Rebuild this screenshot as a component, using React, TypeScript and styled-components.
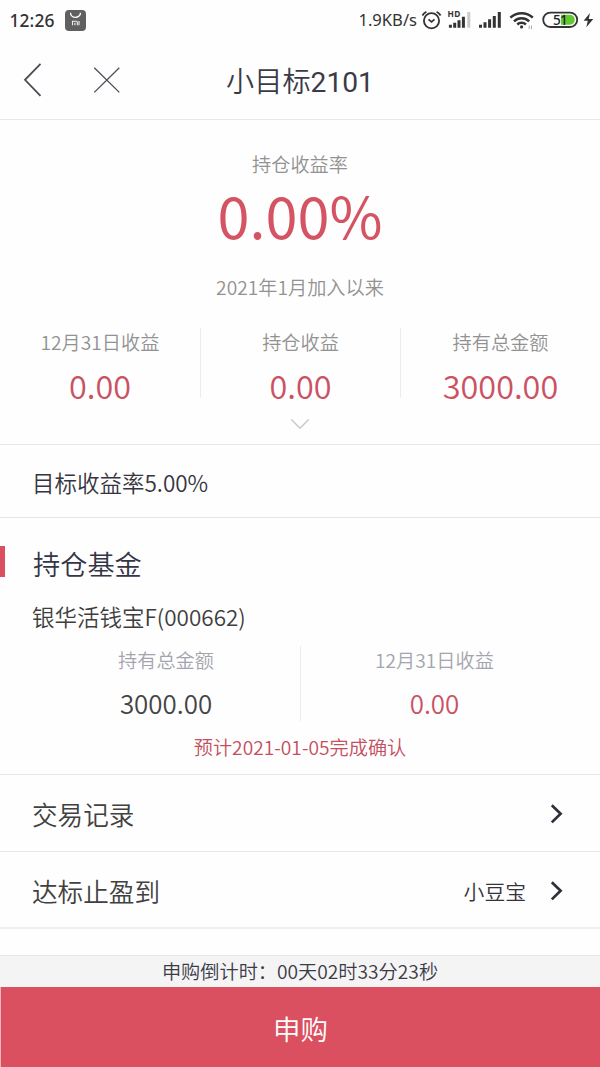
import React from 'react';
import styled, { createGlobalStyle } from 'styled-components';

const GlobalStyle = createGlobalStyle`
  * { box-sizing: border-box; }
  body { margin: 0; background: #fefefe; }
`;

const RED = '#cb5263';

const Page = styled.div`
  width: 600px;
  height: 1067px;
  display: flex;
  flex-direction: column;
  overflow: hidden;
  background: #fefefe;
  color: #3f3f48;
  font-family: 'Noto Sans CJK SC', sans-serif;
  font-weight: 350;
`;

const StatusBar = styled.div`
  height: 40px;
  flex: none;
  display: flex;
  align-items: center;
  padding: 0 5px 0 9.5px;
  color: #333;
  font-family: 'Noto Sans', sans-serif;
`;

const StatusText = styled.span<{ $size: number; $spacing: number; $weight: number }>`
  font-size: ${p => p.$size}px;
  letter-spacing: ${p => p.$spacing}px;
  font-weight: ${p => p.$weight};
  line-height: 40px;
  white-space: nowrap;
`;

const AppBadge = styled.svg`
  margin-left: 10px;
`;

const StatusIcons = styled.svg`
  flex: none;
`;

const StatusRight = styled.div`
  margin-left: auto;
  display: flex;
  align-items: center;
`;

const NavBar = styled.header`
  height: 80px;
  flex: none;
  display: grid;
  grid-template-columns: 150px 1fr 150px;
  align-items: center;
  border-bottom: 1px solid #e8e8e8;
`;

const NavTitle = styled.h1`
  margin: 0;
  padding: 4px 0 0;
  font-size: 28.2px;
  font-weight: 350;
  line-height: 40px;
  text-align: center;
  color: #3b3b48;
`;

const TitleNumber = styled.span`
  font-family: Roboto, sans-serif;
  font-weight: 400;
`;

const Summary = styled.section`
  height: 325px;
  flex: none;
  display: flex;
  flex-direction: column;
  align-items: center;
  border-bottom: 1px solid #e6e6e8;
  padding-top: 30px;
`;

const Label = styled.div<{ $tint?: string }>`
  font-size: 19.2px;
  line-height: 28px;
  color: ${p => p.$tint || '#929292'};
  white-space: nowrap;
`;

const Rate = styled.div`
  font-size: 57.6px;
  font-weight: 400;
  line-height: 72px;
  color: #d55464;
`;

const Since = styled(Label)`
  margin-top: 23px;
`;

const Stats = styled.div`
  width: 100%;
  height: 70px;
  margin-top: 27px;
  display: grid;
  grid-template-columns: repeat(3, 1fr);
`;

const Stat = styled.div`
  display: flex;
  flex-direction: column;
  align-items: center;
  & + & { border-left: 1px solid #ececee; }
`;

const Amount = styled.div<{ $size: number; $color: string }>`
  height: 42px;
  font-size: ${p => p.$size}px;
  line-height: 58px;
  color: ${p => p.$color};
`;

const Expand = styled.svg`
  margin-top: 20px;
`;

const Target = styled.section`
  height: 73px;
  flex: none;
  padding: 0 32px;
  font-size: 22.5px;
  line-height: 74px;
  color: #353541;
  border-bottom: 1px solid #e6e6e8;
`;

const Holdings = styled.section`
  height: 257px;
  flex: none;
  border-bottom: 1px solid #e6e6e8;
  padding-top: 28px;
`;

const SectionTitle = styled.h2`
  margin: 0;
  height: 31px;
  border-left: 5px solid #d95161;
  padding-left: 28px;
  font-size: 27.2px;
  font-weight: 350;
  line-height: 34px;
  color: #353548;
`;

const FundName = styled.div`
  margin-top: 23px;
  padding-left: 32px;
  font-size: 22.5px;
  line-height: 32px;
  color: #3e3e3e;
`;

const FundStats = styled.div`
  height: 75px;
  margin-top: 14px;
  padding: 0 32px;
  display: grid;
  grid-template-columns: 1fr 1fr;
`;

const Notice = styled.div`
  margin-top: 12px;
  text-align: center;
  font-size: 19.2px;
  line-height: 28px;
  color: #c44f60;
`;

const Row = styled.div<{ $last?: boolean }>`
  height: 77px;
  flex: none;
  display: flex;
  align-items: center;
  padding: 0 37px 0 32px;
  border-bottom: ${p => (p.$last ? '2px solid #eeeeee' : '1px solid #e6e6e8')};
`;

const RowTitle = styled.span`
  font-size: 25.6px;
  line-height: 76px;
  padding-top: 2px;
  color: #414141;
`;

const RowValue = styled.span`
  margin-left: auto;
  margin-right: 24px;
  padding-top: 2px;
  font-size: 20.8px;
  line-height: 76px;
  color: #33333c;
`;

const Arrow = styled.svg<{ $push?: boolean }>`
  margin-left: ${p => (p.$push ? 'auto' : '0')};
  margin-top: 2px;
`;

const Footer = styled.footer`
  margin-top: auto;
  flex: none;
`;

const Countdown = styled.div`
  height: 32px;
  background: #f4f4f4;
  border-top: 1px solid #e9e9e9;
  text-align: center;
  font-size: 19.2px;
  line-height: 31px;
  color: #3b3b48;
`;

const BuyButton = styled.button`
  display: block;
  width: 100%;
  height: 80px;
  padding: 2px 0 0;
  border: 0;
  border-left: 1px solid #eeb5bc;
  background: #da5060;
  color: #fff;
  font-family: inherit;
  font-size: 27.5px;
  font-weight: 350;
  line-height: 78px;
`;

const Chevron = ({ push }: { push?: boolean }) => (
  <Arrow $push={push} width="13" height="20" viewBox="0 0 13 20" fill="none" stroke="#30303c" strokeWidth="2.7">
    <path d="M1.8 1.2 10.6 9.8 1.8 18.4" />
  </Arrow>
);

export default function App() {
  return (
    <>
      <GlobalStyle />
      <Page>
        <StatusBar>
          <StatusText $size={17.4} $spacing={0.1} $weight={500}>12:26</StatusText>
          <AppBadge width="21" height="21" viewBox="0 0 21 21" fill="none">
            <rect width="21" height="21" rx="4" fill="#606060" />
            <path d="M5.5 2.8a5 4.6 0 0 0 10 0" stroke="#fff" strokeWidth="1.4" />
            <path d="M7.5 15.3v-4h3.8q1 0 1 1v3M9.9 12.8v2.5M14 11v4.3" stroke="#eee" strokeWidth="1.1" />
          </AppBadge>
          <StatusRight>
            <StatusText $size={16.6} $spacing={0} $weight={450}>1.9KB/s</StatusText>
            <StatusIcons width="178" height="40" viewBox="417 0 178 40" fill="none" stroke="#333">
              <circle cx="431.5" cy="20.8" r="7.6" strokeWidth="1.8" />
              <path d="M428.5 19.3l3 2.5 3-2.5" strokeWidth="1.7" />
              <path d="M422.4 15.5q1.4-2.6 4-3.8M440.6 15.5q-1.4-2.6-4-3.8" strokeWidth="1.8" />
              <text x="447.5" y="17" fontSize="8.3" fontWeight="700" fill="#333" stroke="none" letterSpacing="0.4">HD</text>
              <g strokeWidth="3">
                <path d="M450.4 27.7v-3M454.7 27.7v-5M459 27.7v-7.5M463.4 27.7v-11" />
                <path d="M468.8 27.7v-15.7" stroke="#c9c9c9" />
                <path d="M480.5 27.7v-3M485 27.7v-5.5M489.6 27.7v-8.4M494.3 27.7v-11.8M499.3 27.7v-15.7" />
              </g>
              <g strokeWidth="2.5">
                <path d="M510.4 17.7a16 16 0 0 1 22.4 0" />
                <path d="M514 21.3a11 11 0 0 1 15.2 0" />
                <path d="M517.3 24.5a6.2 6.2 0 0 1 8.6 0" />
              </g>
              <circle cx="521.6" cy="26.9" r="1.6" fill="#333" stroke="none" />
              <path d="M529.2 25.5v3.6M531.5 25.5v3.6" strokeWidth="1" stroke="#aaa" />
              <rect x="543.2" y="12.6" width="34" height="14.4" rx="7.2" strokeWidth="1.8" />
              <path d="M561 14.8h8.8a5 5 0 0 1 0 10H561z" fill="#63c932" stroke="none" />
              <text x="560" y="25" fontSize="13.6" fontWeight="500" fill="#222" stroke="none" textAnchor="middle" letterSpacing="-0.8">51</text>
              <path d="M590 13l-6.4 7.8h4.2l-1.5 6.4 7-8.2h-4.6z" fill="#333" stroke="none" />
            </StatusIcons>
          </StatusRight>
        </StatusBar>

        <NavBar>
          <svg width="150" height="79" viewBox="0 40 150 79" fill="none" stroke="#4c4c58">
            <path d="M40.5 63.8 25 79.8 40.5 95.8" strokeWidth="1.8" />
            <path d="M94.3 67.8 119.3 92.4M119.3 67.8 94.3 92.4" strokeWidth="1.3" />
          </svg>
          <NavTitle>小目标<TitleNumber>2101</TitleNumber></NavTitle>
        </NavBar>

        <Summary>
          <Label>持仓收益率</Label>
          <Rate>0.00%</Rate>
          <Since>2021年1月加入以来</Since>
          <Stats>
            <Stat>
              <Label>12月31日收益</Label>
              <Amount $size={32.4} $color={RED}>0.00</Amount>
            </Stat>
            <Stat>
              <Label>持仓收益</Label>
              <Amount $size={32.4} $color={RED}>0.00</Amount>
            </Stat>
            <Stat>
              <Label>持有总金额</Label>
              <Amount $size={32.4} $color={RED}>3000.00</Amount>
            </Stat>
          </Stats>
          <Expand width="20" height="12" viewBox="0 0 20 12" fill="none" stroke="#c8c8d0" strokeWidth="1.5">
            <path d="M1.3 1.5 10 10.2 18.7 1.5" />
          </Expand>
        </Summary>

        <Target>目标收益率5.00%</Target>

        <Holdings>
          <SectionTitle>持仓基金</SectionTitle>
          <FundName>银华活钱宝F(000662)</FundName>
          <FundStats>
            <Stat>
              <Label $tint="#a4a4ae">持有总金额</Label>
              <Amount $size={25.9} $color="#444">3000.00</Amount>
            </Stat>
            <Stat>
              <Label $tint="#a4a4ae">12月31日收益</Label>
              <Amount $size={25.9} $color={RED}>0.00</Amount>
            </Stat>
          </FundStats>
          <Notice>预计2021-01-05完成确认</Notice>
        </Holdings>

        <Row>
          <RowTitle>交易记录</RowTitle>
          <Chevron push />
        </Row>
        <Row $last>
          <RowTitle>达标止盈到</RowTitle>
          <RowValue>小豆宝</RowValue>
          <Chevron />
        </Row>

        <Footer>
          <Countdown>申购倒计时：00天02时33分23秒</Countdown>
          <BuyButton>申购</BuyButton>
        </Footer>
      </Page>
    </>
  );
}
